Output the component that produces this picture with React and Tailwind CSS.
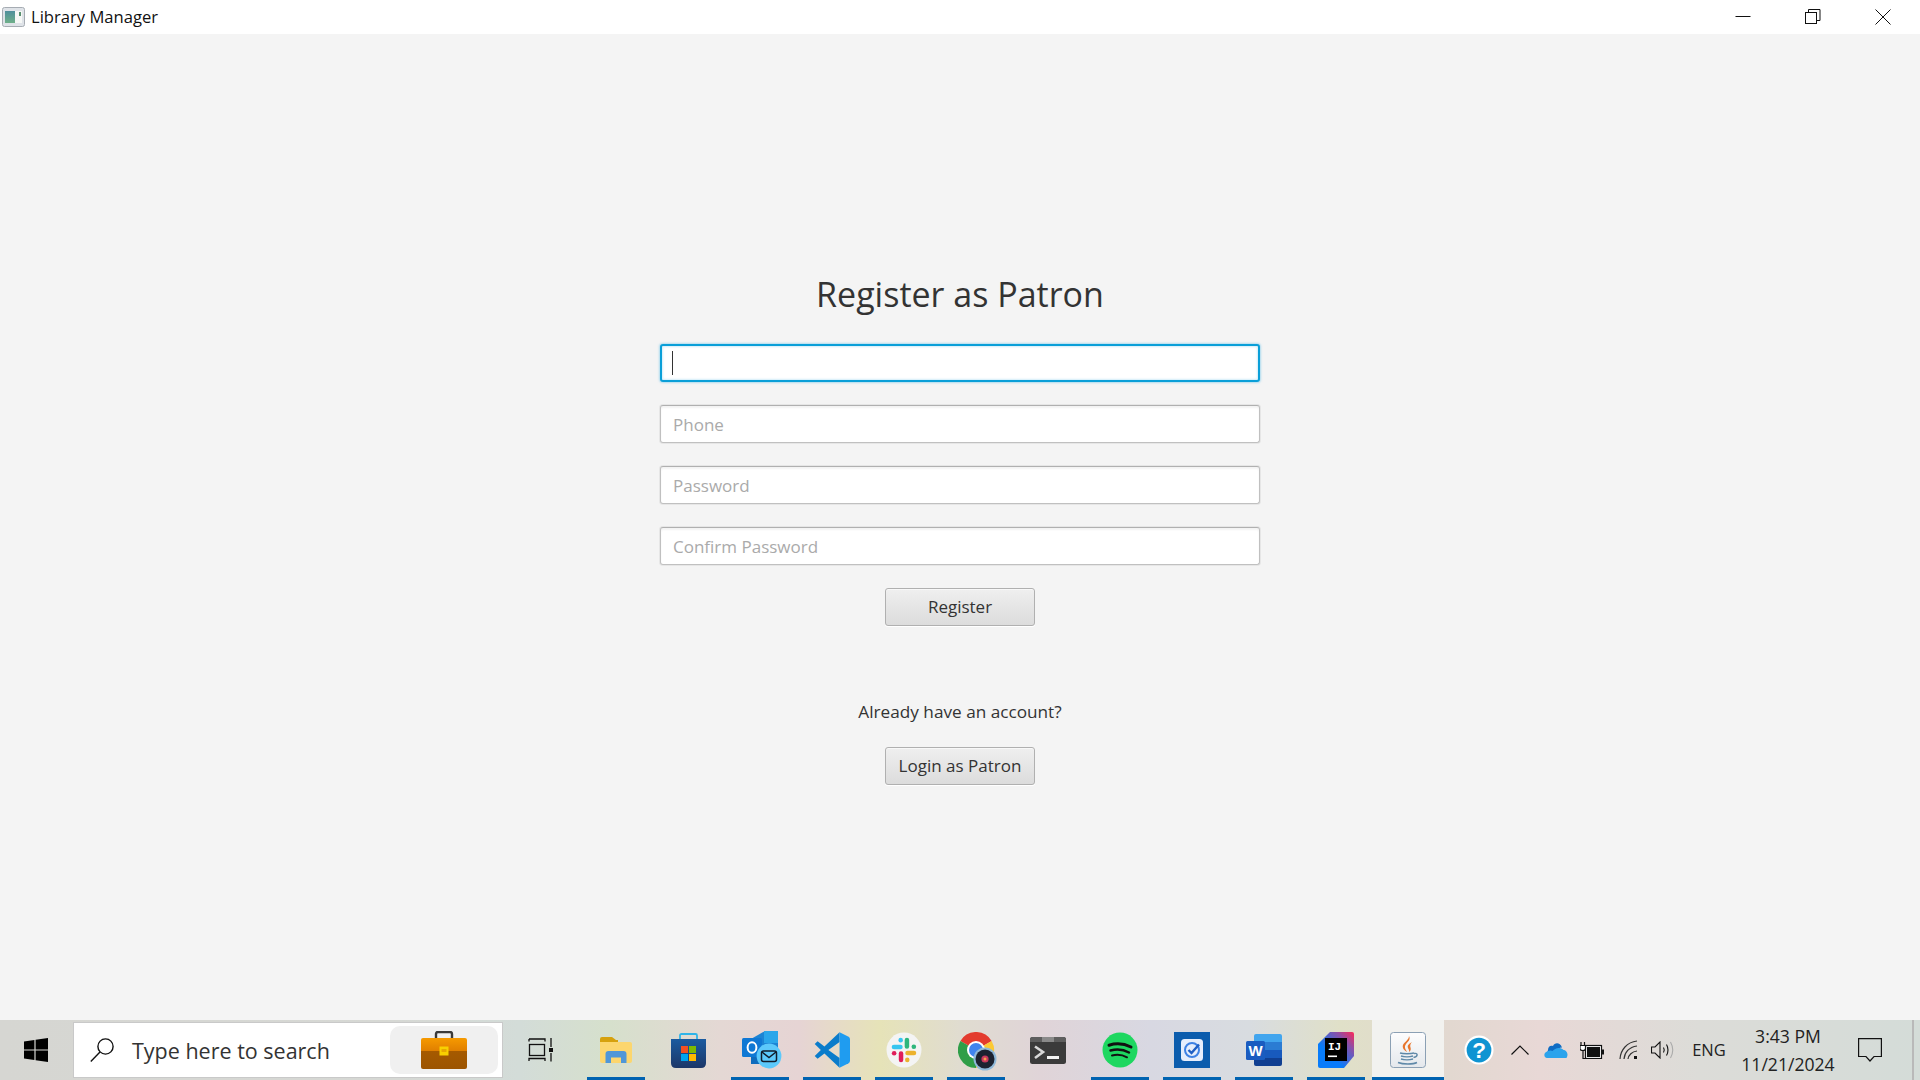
const FONT = "font-['Open_Sans','Noto_Sans',sans-serif]";

function TitleIcon() {
  return (
    <svg width="23" height="20" viewBox="0 0 23 20">
      <defs>
        <linearGradient id="ti" x1="0" y1="0" x2="0" y2="1">
          <stop offset="0" stopColor="#4f8f9c" />
          <stop offset="1" stopColor="#6fb08a" />
        </linearGradient>
      </defs>
      <rect x="0.5" y="0.5" width="22" height="19" rx="2" fill="#dfe3e8" stroke="#a6acb3" />
      <rect x="3" y="4" width="10" height="12" fill="url(#ti)" />
      <rect x="13" y="4" width="7" height="12" fill="#f6f8f6" />
      <rect x="17" y="5" width="2" height="4" fill="#59906f" />
    </svg>
  );
}

function WinControls() {
  return (
    <div className="flex h-full mr-[2px]">
      <div className="w-[70px] flex items-center justify-center">
        <svg width="16" height="30" viewBox="0 0 16 30"><path d="M0.5 14.5H15.5" stroke="#111" fill="none" /></svg>
      </div>
      <div className="w-[70px] flex items-center justify-center">
        <svg width="16" height="30" viewBox="0 0 16 30" fill="none" stroke="#111">
          <rect x="0.5" y="10.5" width="11" height="11" />
          <path d="M3.5 10V7.5H15V18.5H12" />
        </svg>
      </div>
      <div className="w-[70px] flex items-center justify-center">
        <svg width="16" height="30" viewBox="0 0 16 30" fill="none" stroke="#111"><path d="M0.5 7.5L15.5 22.5M15.5 7.5L0.5 22.5" /></svg>
      </div>
    </div>
  );
}

function Field({ placeholder, focused }) {
  if (focused) {
    return (
      <div className="relative w-full h-[38px] mb-[23px] rounded-[3px] bg-white border-2 border-[#0a9fd8] shadow-[0_0_2px_1px_rgba(120,200,235,0.55),inset_0_0_2px_1px_rgba(120,200,235,0.35)]">
        <input aria-label="Name" className="w-full h-full px-[10px] bg-transparent outline-none" />
        <div className="absolute left-[10px] top-[5px] w-[1px] h-[24px] bg-[#333]" />
      </div>
    );
  }
  return (
    <input
      placeholder={placeholder}
      className="block w-full h-[38px] mb-[23px] px-[12px] rounded-[3px] bg-white border border-[#c0c0c0] border-t-[#b0b0b0] shadow-[inset_0_2px_2px_rgba(0,0,0,0.05),0_0_0_1px_rgba(200,200,200,0.3)] outline-none text-[17px] text-[#333] placeholder:text-[#aaaaaa]"
    />
  );
}

function Btn({ children, className = "" }) {
  return (
    <button className={`block w-[150px] h-[38px] rounded-[3px] border border-[#b0b0b0] bg-[linear-gradient(180deg,#efefef,#dcdcdc)] shadow-[inset_0_1px_0_#f8f8f8,0_1px_0_#ffffff] text-[17px] text-[#333] ${className}`}>
      {children}
    </button>
  );
}

function WinLogo() {
  return (
    <svg width="24" height="24" viewBox="0 0 24 24" fill="#000">
      <path d="M0 3.4L10.4 2V11.4H0Z" />
      <path d="M11.6 1.8L24 0V11.4H11.6Z" />
      <path d="M0 12.6H10.4V22L0 20.6Z" />
      <path d="M11.6 12.6H24V24L11.6 22.2Z" />
    </svg>
  );
}

function SearchIcon() {
  return (
    <svg width="24" height="24" viewBox="0 0 24 24" fill="none" stroke="#111" strokeWidth="1.4">
      <circle cx="15.5" cy="8.5" r="7.6" />
      <path d="M10 14L0.8 23.4" />
    </svg>
  );
}

function Briefcase() {
  return (
    <svg width="46" height="38" viewBox="0 0 46 38">
      <defs>
        <linearGradient id="b1" x1="0" y1="0" x2="0" y2="1">
          <stop offset="0" stopColor="#f69a00" />
          <stop offset="1" stopColor="#e07f00" />
        </linearGradient>
        <linearGradient id="b2" x1="0" y1="0" x2="0" y2="1">
          <stop offset="0" stopColor="#a55a00" />
          <stop offset="1" stopColor="#9c5400" />
        </linearGradient>
      </defs>
      <path d="M15 7V3Q15 1 17 1H29Q31 1 31 3V7" fill="none" stroke="#3a3a3a" strokeWidth="2.4" />
      <path d="M0 9Q0 7 2 7H44Q46 7 46 9V20H0Z" fill="url(#b1)" />
      <path d="M0 20H46V36Q46 38 44 38H2Q0 38 0 36Z" fill="url(#b2)" />
      <rect x="18.5" y="15.5" width="9" height="9" fill="#f8d000" />
      <rect x="20.5" y="18" width="5" height="3" fill="#e8a800" />
    </svg>
  );
}

function TaskView() {
  return (
    <svg width="26" height="24" viewBox="0 0 26 24" fill="none" stroke="#111" strokeWidth="1.3" className="mr-[2px]">
      <path d="M1 1H17V3.5M1 1V3.5M1 23V20.5H17V23" strokeLinejoin="miter" />
      <rect x="1.5" y="6.5" width="15" height="11" />
      <path d="M23 0V9M23 15V23.5" />
      <rect x="21" y="10" width="4" height="4" fill="#111" stroke="none" />
    </svg>
  );
}

function Explorer() {
  return (
    <svg width="32" height="26" viewBox="0 0 32 26">
      <path d="M0 2Q0 0 2 0H12L16 3H18V6H0Z" fill="#d6a10d" />
      <path d="M0 5H30Q32 5 32 7V24Q32 26 30 26H2Q0 26 0 24Z" fill="#fcd66e" />
      <path d="M5.5 26V17Q5.5 14 8.5 14H23.5Q26.5 14 26.5 17V26H21V20.5H11V26Z" fill="#4f97d8" />
    </svg>
  );
}

function Store() {
  return (
    <svg width="35" height="35" viewBox="0 0 35 35">
      <defs>
        <linearGradient id="st" x1="0" y1="0" x2="0" y2="1">
          <stop offset="0" stopColor="#1b5ba0" />
          <stop offset="1" stopColor="#1c3768" />
        </linearGradient>
      </defs>
      <path d="M9 8V2.5Q9 1 10.5 1H24.5Q26 1 26 2.5V8" fill="none" stroke="#2fb4e8" strokeWidth="1.8" />
      <path d="M0 6H35V30Q35 35 30 35H5Q0 35 0 30Z" fill="url(#st)" />
      <rect x="10" y="13" width="7" height="7" fill="#f25022" />
      <rect x="18" y="13" width="7" height="7" fill="#7fba00" />
      <rect x="10" y="21" width="7" height="7" fill="#00a4ef" />
      <rect x="18" y="21" width="7" height="7" fill="#ffb900" />
    </svg>
  );
}

function Outlook() {
  return (
    <svg width="40" height="38" viewBox="0 0 40 38" className="ml-[3px]">
      <path d="M9 8L23 0Q25 -0.5 27 0L36 5V24H9Z" fill="#1c84d4" />
      <path d="M22 0H36V12H22Z" fill="#2aa6ea" />
      <path d="M9 20H30V33H9Z" fill="#0f6cbd" />
      <rect x="0" y="7" width="20" height="19" rx="1.5" fill="#0f78d4" />
      <ellipse cx="10" cy="16.5" rx="4.4" ry="5.2" fill="none" stroke="#fff" strokeWidth="2" />
      <circle cx="27" cy="25" r="12.4" fill="#5cc9fb" />
      <rect x="19.5" y="20" width="15" height="10.5" rx="2" fill="#5cc9fb" stroke="#101c2b" strokeWidth="1.5" />
      <path d="M20 21L27 26.5L34 21" fill="none" stroke="#101c2b" strokeWidth="1.5" />
    </svg>
  );
}

function VSCode() {
  return (
    <svg width="36" height="36" viewBox="0 0 100 100">
      <path d="M71 1L29 40L10 26L2 33L19 50L2 67L10 74L29 60L71 99V72L40 50L71 28Z" fill="#0a7ccb" />
      <path d="M71 1L96 13Q100 15 100 20V80Q100 85 96 87L71 99Z" fill="#1f9cf0" />
    </svg>
  );
}

function Slack() {
  return (
    <svg width="36" height="36" viewBox="0 0 36 36">
      <circle cx="18" cy="18" r="17.5" fill="#f4f4f4" />
      <g transform="translate(5 5) scale(1.18)" fill="none" strokeLinecap="round" strokeWidth="3.8">
        <path d="M2.5 8.5H8" stroke="#36c5f0" />
        <path d="M8.2 2.6V2.7" stroke="#36c5f0" />
        <path d="M13.5 2.5V8" stroke="#2eb67d" />
        <path d="M19.4 8.2H19.3" stroke="#2eb67d" />
        <path d="M14 13.5H19.5" stroke="#ecb22e" />
        <path d="M13.8 19.4V19.3" stroke="#ecb22e" />
        <path d="M8.5 14V19.5" stroke="#e01e5a" />
        <path d="M2.6 13.8H2.7" stroke="#e01e5a" />
      </g>
    </svg>
  );
}

function Chrome() {
  return (
    <svg width="40" height="40" viewBox="0 0 40 40" className="ml-[4px] mt-[4px]">
      <path d="M18 18L2.4 9A18 18 0 0 1 33.6 9Z" fill="#e33b2e" />
      <path d="M18 18L2.4 9A18 18 0 0 0 18 36Z" fill="#2f9e48" />
      <path d="M18 18L33.6 9A18 18 0 0 1 18 36Z" fill="#fcc934" />
      <circle cx="18" cy="18" r="9" fill="#fff" />
      <circle cx="18" cy="18" r="7" fill="#3f84ee" />
      <circle cx="27" cy="27" r="11.5" fill="#8fb8d8" />
      <circle cx="27" cy="27" r="9.5" fill="#1c2230" />
      <circle cx="27" cy="27" r="3.6" fill="#c8385c" />
      <circle cx="27" cy="27" r="1.5" fill="#f6a04a" />
    </svg>
  );
}

function Terminal() {
  return (
    <svg width="36" height="27" viewBox="0 0 36 27">
      <rect x="0" y="0" width="36" height="27" rx="2.5" fill="#3b3b3b" />
      <path d="M0 2.5Q0 0 2.5 0H12V5H0Z" fill="#5e5e5e" />
      <rect x="12" y="0" width="12" height="5" fill="#8a8a8a" />
      <path d="M24 0H33.5Q36 0 36 2.5V5H24Z" fill="#5e5e5e" />
      <path d="M5 9.5L13 15L5 21" fill="none" stroke="#d8d8d8" strokeWidth="2.6" />
      <rect x="17" y="19" width="12" height="3" fill="#f2f2f2" />
    </svg>
  );
}

function Spotify() {
  return (
    <svg width="36" height="36" viewBox="0 0 36 36" fill="none" stroke="#111" strokeLinecap="round">
      <circle cx="18" cy="18" r="17.5" fill="#1ed760" stroke="none" />
      <path d="M7 13.2C14 11 22 11.5 29 15" strokeWidth="3" />
      <path d="M8.5 18.5C14.5 17 21.5 17.5 27 20.5" strokeWidth="2.5" />
      <path d="M10 23.5C15 22.3 20.5 22.8 25 25.3" strokeWidth="2" />
    </svg>
  );
}

function Todo() {
  return (
    <div className="w-[36px] h-[36px] bg-[#0b5cad] flex items-center justify-center">
      <svg width="22" height="22" viewBox="0 0 22 22" fill="none">
        <rect x="0" y="0" width="22" height="22" rx="3.5" fill="#e6eefc" />
        <circle cx="11" cy="11" r="7" stroke="#3f82e4" strokeWidth="2" />
        <path d="M7.5 11L10.5 14L18 5.5" stroke="#1f5fc4" strokeWidth="2.4" />
      </svg>
    </div>
  );
}

function Word() {
  return (
    <svg width="36" height="33" viewBox="0 0 36 33">
      <path d="M8 2Q8 0 10 0H34Q36 0 36 2V8H8Z" fill="#41a5ee" />
      <rect x="8" y="8" width="28" height="8" fill="#2b7cd3" />
      <rect x="8" y="16" width="28" height="8" fill="#185abd" />
      <path d="M8 24H36V30Q36 32 34 32H10Q8 32 8 30Z" fill="#103f91" />
      <rect x="0" y="7" width="19" height="19" rx="1.5" fill="#1a5cc0" />
      <text x="9.5" y="22" textAnchor="middle" fontFamily="'Liberation Sans',sans-serif" fontWeight="700" fontSize="15" fill="#fff">W</text>
    </svg>
  );
}

function IntelliJ() {
  return (
    <svg width="36" height="36" viewBox="0 0 36 36">
      <defs>
        <linearGradient id="ij" x1="0" y1="1" x2="1" y2="0">
          <stop offset="0.35" stopColor="#087cfa" />
          <stop offset="0.75" stopColor="#8a4fa8" />
          <stop offset="1" stopColor="#fe2857" />
        </linearGradient>
      </defs>
      <path d="M12 0H34Q36 0 36 2V24L26 36H2Q0 36 0 34V12Z" fill="url(#ij)" />
      <rect x="7" y="6" width="22" height="23" fill="#000" />
      <text x="10" y="17.5" fontFamily="'Liberation Mono',monospace" fontWeight="700" fontSize="11" fill="#fff">IJ</text>
      <rect x="10" y="23.5" width="9" height="1.6" fill="#fff" />
    </svg>
  );
}

function Java() {
  return (
    <svg width="36" height="36" viewBox="0 0 36 36">
      <defs>
        <linearGradient id="jv" x1="0" y1="0" x2="0" y2="1">
          <stop offset="0" stopColor="#fdfdfd" />
          <stop offset="1" stopColor="#e4e8ec" />
        </linearGradient>
      </defs>
      <rect x="0.5" y="0.5" width="35" height="35" rx="3" fill="url(#jv)" stroke="#8ba0b4" />
      <path d="M19 4C22 9 14 11 15 16C15.5 18 17 19 17 20C14 18 12 16 13 13C14 10 19 8 19 4Z" fill="#e8762d" />
      <path d="M22 10C19 12 17 13 18 16C18.5 17.5 19.5 18 19 20C21 18.5 21 17 20.5 15.5C20 14 20 12 22 10Z" fill="#e8762d" />
      <g fill="none" stroke="#5f89a8" strokeWidth="1.4">
        <path d="M10 21C13 22 21 22 24 21" />
        <path d="M11 24C14 25 20 25 23 24" />
        <path d="M11 27C14 28 20 28 23 27" />
        <path d="M8 30.5C13 32.5 23 32.5 27 30.5" />
        <path d="M24 21.5C28 20.5 28.5 24.5 23.5 25.5" />
      </g>
    </svg>
  );
}

function AppSlot({ children, on, active }) {
  return (
    <div className={`relative w-[72px] h-full flex items-center justify-center ${active ? "bg-[#f2f2ef]" : ""}`}>
      {children}
      {on && <div className={`absolute bottom-0 h-[3px] bg-[#0063b1] ${active ? "inset-x-0" : "left-[7px] right-[7px]"}`} />}
    </div>
  );
}

function Help() {
  return (
    <svg width="32" height="32" viewBox="0 0 32 32">
      <circle cx="16" cy="16" r="15.5" fill="#fff" />
      <circle cx="16" cy="16" r="13.2" fill="#0f94d2" />
      <text x="16" y="24" textAnchor="middle" fontFamily="'Liberation Sans',sans-serif" fontWeight="700" fontSize="24" fill="#fff">?</text>
    </svg>
  );
}

function OneDrive() {
  return (
    <svg width="24" height="16" viewBox="0 0 24 16">
      <path d="M4 8C4 4 7 3 9 4C10.5 0.5 16 0 18 5.5C15 5.5 14 7 13 8L8 10L3 11Z" fill="#0f6cc4" />
      <path d="M3 16C0 16 -1 11 3 9.5C5 8.5 7 8 8.5 9C10 7 13 5.5 16 6C18 6.5 19 7.5 19.5 8C22.5 8 25 12.5 22.5 16Z" fill="#2ba3ec" />
    </svg>
  );
}

function Battery() {
  return (
    <svg width="24" height="17" viewBox="0 0 24 17" fill="none" stroke="#111" strokeWidth="1.2">
      <rect x="5.5" y="3.5" width="16" height="13" fill="#fff" />
      <rect x="7" y="5" width="13" height="10" fill="#111" stroke="none" />
      <rect x="22" y="7.5" width="2" height="5" fill="#111" stroke="none" />
      <path d="M1 0V3M4.5 0V3" />
      <path d="M0 3.5H5.5V6.5Q5.5 8.5 3 8.5Q0 8.5 0 6.5Z" fill="#fff" />
      <path d="M3 8.5V16.5H6" />
    </svg>
  );
}

function Wifi() {
  return (
    <svg width="20" height="20" viewBox="0 0 20 20" fill="none" strokeWidth="1.2">
      <path d="M1 19C1.5 10 8 2 18 1" stroke="#333" />
      <path d="M5 19C5.5 12.5 10 7 18 6" stroke="#333" />
      <path d="M9 19C9.5 15 13 11.5 18 11" stroke="#333" />
      <rect x="15" y="16" width="3" height="3" fill="#111" />
    </svg>
  );
}

function Sound() {
  return (
    <svg width="24" height="18" viewBox="0 0 24 18" fill="none" stroke="#111" strokeWidth="1.1">
      <path d="M0.5 6H4L9 1V17L4 12H0.5Z" />
      <path d="M12.5 6.5Q14 9 12.5 11.5" />
      <path d="M15.5 3.5Q18.5 9 15.5 14.5" />
      <path d="M19.5 1Q24 9 19.5 17" stroke="#aaa" />
    </svg>
  );
}

function Notif() {
  return (
    <svg width="24" height="24" viewBox="0 0 24 24" fill="none" stroke="#111" strokeWidth="1.2">
      <path d="M0.6 0.6H23.4V18.5H16L12 23L8 18.5H0.6Z" />
    </svg>
  );
}

export default function App() {
  return (
    <div className={`h-screen w-full flex flex-col overflow-hidden bg-[#f4f4f4] ${FONT}`}>
      <header className="h-[34px] shrink-0 bg-white flex items-center justify-between">
        <div className="flex items-center">
          <div className="ml-[2px] mr-[6px] flex"><TitleIcon /></div>
          <span className="text-[16.6px] text-[#111] pt-[1px]">Library Manager</span>
        </div>
        <WinControls />
      </header>

      <main className="flex-1 min-h-0 pt-[235px]">
        <div className="w-[600px] mx-auto flex flex-col items-center">
          <h1 className="h-[50px] mb-[25px] leading-[50px] text-[34px] text-[#333]">Register as Patron</h1>
          <Field focused />
          <Field placeholder="Phone" />
          <Field placeholder="Password" />
          <Field placeholder="Confirm Password" />
          <Btn>Register</Btn>
          <p className="mt-[74px] mb-[23px] h-[24px] leading-[24px] text-[17.2px] text-[#333]">Already have an account?</p>
          <Btn>Login as Patron</Btn>
        </div>
      </main>

      <footer className="h-[60px] shrink-0 flex items-stretch bg-[linear-gradient(90deg,#d6d6d2_0px,#d6d8d4_400px,#d3dcd8_520px,#d6e0cc_610px,#e4d8d4_720px,#e6d4d4_800px,#e6e3b8_880px,#e0dcd0_960px,#e0d4d8_1040px,#d8d8e2_1150px,#d8dce0_1250px,#e0e0c8_1340px,#e2d8d0_1450px,#e8d8d6_1540px,#dcdcd8_1700px,#d4dcd8_1920px)]">
        <div className="w-[72px] mr-[1px] flex items-center justify-center"><WinLogo /></div>
        <div className="w-[430px] my-[2px] flex items-center bg-white border border-[#c9c9c9]">
          <div className="ml-[16px] flex"><SearchIcon /></div>
          <span className="ml-[18px] pt-[2px] text-[21.5px] text-[#333]">Type here to search</span>
          <div className="ml-auto mr-[4px] w-[108px] h-[48px] rounded-[10px] bg-[#f0f0f0] flex items-center justify-center"><Briefcase /></div>
        </div>
        <div className="w-[77px] flex items-center justify-center"><TaskView /></div>
        <AppSlot on><Explorer /></AppSlot>
        <AppSlot><Store /></AppSlot>
        <AppSlot on><Outlook /></AppSlot>
        <AppSlot on><VSCode /></AppSlot>
        <AppSlot on><Slack /></AppSlot>
        <AppSlot on><Chrome /></AppSlot>
        <AppSlot><Terminal /></AppSlot>
        <AppSlot on><Spotify /></AppSlot>
        <AppSlot on><Todo /></AppSlot>
        <AppSlot on><Word /></AppSlot>
        <AppSlot on><IntelliJ /></AppSlot>
        <AppSlot on active><Java /></AppSlot>
        <div className="flex-1 flex items-center">
          <div className="ml-[20px] w-[30px] flex justify-center"><Help /></div>
          <div className="ml-[11px] w-[30px] flex justify-center">
            <svg width="18" height="10" viewBox="0 0 18 10" fill="none" stroke="#111" strokeWidth="1.2"><path d="M0.5 9.5L9 1L17.5 9.5" /></svg>
          </div>
          <div className="ml-[6px] w-[30px] flex justify-center"><OneDrive /></div>
          <div className="ml-[6px] w-[30px] flex justify-center"><Battery /></div>
          <div className="ml-[7px] w-[30px] flex justify-center"><Wifi /></div>
          <div className="ml-[4px] w-[30px] flex justify-center"><Sound /></div>
          <div className="ml-[11px] w-[40px] text-center text-[16.5px] text-[#222] whitespace-nowrap">ENG</div>
          <div className="ml-[9px] w-[100px] flex flex-col items-center text-[17.6px] text-[#222] leading-[28px] whitespace-nowrap">
            <span>3:43 PM</span>
            <span>11/21/2024</span>
          </div>
          <div className="ml-[17px] w-[30px] flex justify-center"><Notif /></div>
          <div className="ml-[27px] w-[2px] h-full bg-[#b9b9b9]" />
        </div>
      </footer>
    </div>
  );
}
